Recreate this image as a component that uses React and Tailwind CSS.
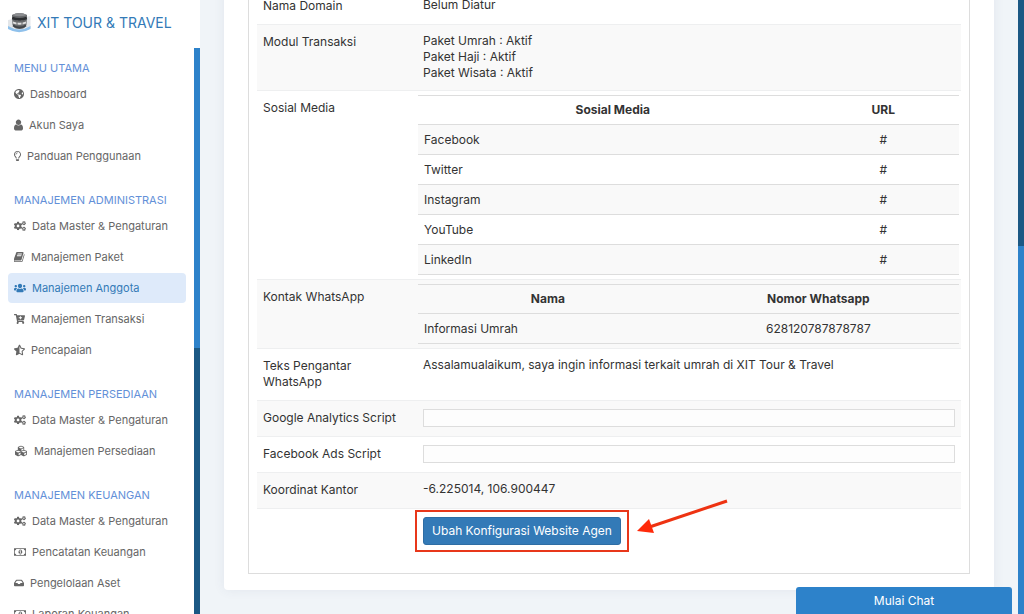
import {
  FaCartPlus,
  FaCogs,
  FaCubes,
  FaGlobeAmericas,
  FaInbox,
  FaRegLightbulb,
  FaStarHalfAlt,
  FaUsers,
} from 'react-icons/fa';

const UserIcon = ({ className }) => (
  <svg viewBox="256 128 1280 1536" fill="currentColor" className={className}>
    <path d="M1536 1399q0 109-62.5 187t-150.5 78h-854q-88 0-150.5-78t-62.5-187q0-85 8.5-160.5t31.5-152 58.5-131 94-89 134.500-34.500q131 128 313 128t313-128q76 0 134.500 34.500t94 89 58.500 131 31.500 152 8.500 160.500zm-256-887q0 159-112.500 271.500t-271.500 112.500-271.500-112.500-112.500-271.500 112.500-271.500 271.500-112.500 271.500 112.500 112.500 271.500z" />
  </svg>
);

const BookIcon = ({ className }) => (
  <svg viewBox="64 128 1664 1536" fill="currentColor" className={className}>
    <path d="M1639 478q40 57 18 129l-275 906q-19 64-76.500 107.500t-122.500 43.500h-923q-77 0-148.500-53.500t-99.500-131.500q-24-67-2-127 0-4 3-27t4-37q1-8-3-21.500t-3-19.500q2-11 8-21t16.500-23.500 16.500-23.500q23-38 45-91.500t30-91.500q3-10 .5-30t-.5-28q3-11 17-28t17-23q21-36 42-92t25-90q1-9-2.500-32t.5-28q4-13 22-30.500t22-22.500q19-26 42.500-84.500t27.500-96.500q1-8-3-25.500t-2-26.500q2-8 9-18t18-23 17-21q8-12 16.500-30.500t15-35 16-36 19.500-32 26.500-23.500 36-11.500 47.500 5.500l-1 3q38-9 51-9h761q74 0 114 56t18 130l-274 906q-36 119-71.500 153.500t-128.500 34.500h-869q-27 0-38 15-11 16-1 43 24 70 144 70h923q29 0 56-15.500t35-41.500l300-987q7-22 5-57 38 15 59 43zm-1064 2q-4 13 2 22.500t20 9.500h608q13 0 25.500-9.500t16.500-22.500l21-64q4-13-2-22.500t-20-9.500h-608q-13 0-25.500 9.500t-16.500 22.500zm-83 256q-4 13 2 22.500t20 9.500h608q13 0 25.500-9.500t16.500-22.500l21-64q4-13-2-22.500t-20-9.500h-608q-13 0-25.500 9.500t-16.500 22.500z" />
  </svg>
);

const MoneyIcon = ({ className }) => (
  <svg viewBox="0 128 2048 1536" fill="currentColor" className={className}>
    <path d="M896 1152h384v-96h-128v-448h-114l-148 137 77 80q42-37 55-57h2v288h-128v96zm512-256q0 70-21 142t-59.500 134-101.500 101-138 39-138-39-101.500-101-59.500-134-21-142 21-142 59.500-134 101.500-101 138-39 138 39 101.500 101 59.500 134 21 142zm512 256v-512q-106 0-181-75t-75-181h-1280q0 106-75 181t-181 75v512q106 0 181 75t75 181h1280q0-106 75-181t181-75zm128-832v1152q0 26-19 45t-45 19h-1920q-26 0-45-19t-19-45v-1152q0-26 19-45t45-19h1920q26 0 45 19t19 45z" />
  </svg>
);

const Logo = () => (
  <svg viewBox="0 0 24 24" className="h-6 w-6 shrink-0" aria-hidden="true">
    <path d="M0 9v8q11.500 8 22.500 0V5z" fill="#e3e6e9" />
    <path d="M0 15q11.500 7 22.500 0v3q-11.500 6.500-22.500 0z" fill="#8fc1ec" />
    <path d="M4 4Q11.500 0 19 4l-.5 9.500q-1 4.500-7 4.500t-7-4.500z" fill="#66686b" />
    <path d="M4 4Q11.500 0 19 4q-7.500 2.500-15 0z" fill="#8b8d90" />
    <path d="M4.200 7q7.300 2.500 14.600 0" fill="none" stroke="#2c2e31" strokeWidth="2.500" />
    <path d="M5 10.500q6.500 2.500 13 0v2q-6.500 2.500-13 0z" fill="#dcdcdc" />
    <path d="M9 9v6M14 9v6" stroke="#66686b" strokeWidth="1" />
    <path d="M5 14.500q6.500 4 13 0" fill="none" stroke="#3f4246" strokeWidth="2" />
  </svg>
);

const menu = [
  {
    title: 'MENU UTAMA',
    items: [
      { label: 'Dashboard', icon: FaGlobeAmericas, size: 'w-[10px]' },
      { label: 'Akun Saya', icon: UserIcon, size: 'w-[9px]' },
      { label: 'Panduan Penggunaan', icon: FaRegLightbulb, size: 'w-[7px]' },
    ],
  },
  {
    title: 'MANAJEMEN ADMINISTRASI',
    items: [
      { label: 'Data Master & Pengaturan', icon: FaCogs, size: 'w-3' },
      { label: 'Manajemen Paket', icon: BookIcon, size: 'w-[11px]' },
      { label: 'Manajemen Anggota', icon: FaUsers, size: 'w-3', active: true },
      { label: 'Manajemen Transaksi', icon: FaCartPlus, size: 'w-[11px]' },
      { label: 'Pencapaian', icon: FaStarHalfAlt, size: 'w-[11px]' },
    ],
  },
  {
    title: 'MANAJEMEN PERSEDIAAN',
    items: [
      { label: 'Data Master & Pengaturan', icon: FaCogs, size: 'w-3' },
      { label: 'Manajemen Persediaan', icon: FaCubes, size: 'w-[14px]' },
    ],
  },
  {
    title: 'MANAJEMEN KEUANGAN',
    items: [
      { label: 'Data Master & Pengaturan', icon: FaCogs, size: 'w-3' },
      { label: 'Pencatatan Keuangan', icon: MoneyIcon, size: 'w-3' },
      { label: 'Pengelolaan Aset', icon: FaInbox, size: 'w-[10px]' },
      { label: 'Laporan Keuangan', icon: MoneyIcon, size: 'w-3' },
    ],
  },
];

const sosialMedia = ['Facebook', 'Twitter', 'Instagram', 'YouTube', 'LinkedIn'];

function Sidebar() {
  return (
    <aside className="flex w-[200px] shrink-0 flex-col bg-white text-[11px]">
      <a
        href="#"
        className="flex h-12 shrink-0 items-center gap-[5px] pb-[2px] pl-2 text-[14px] whitespace-nowrap text-[#337ab7]"
      >
        <Logo />
        XIT TOUR &amp; TRAVEL
      </a>
      <div className="flex min-h-0 flex-1">
        <nav className="flex min-w-0 flex-1 flex-col gap-[18px] overflow-hidden px-2 pt-[10px]">
          {menu.map((group) => (
            <div key={group.title} className="shrink-0">
              <h2 className="mb-px h-5 pl-[6px] leading-5 whitespace-nowrap text-[#6390d8]">{group.title}</h2>
              <ul>
                {group.items.map(({ label, icon: Icon, size, active }) => (
                  <li key={label} className="mb-px">
                    <a
                      href="#"
                      className={`flex h-[30px] items-center gap-[6px] rounded pl-[6px] whitespace-nowrap ${
                        active ? 'bg-[#deeafa] text-[#337ab7]' : 'text-[#666]'
                      }`}
                    >
                      <Icon className={`h-3 shrink-0 ${size}`} />
                      {label}
                    </a>
                  </li>
                ))}
              </ul>
            </div>
          ))}
        </nav>
        <div className="w-[6px] shrink-0 bg-[#1b5884]">
          <div className="h-[300px] bg-[#2d82ca]" />
        </div>
      </div>
    </aside>
  );
}

function Row({ label, htmlFor, flush, children }) {
  return (
    <tr className="border-t border-[#eeeff0] odd:bg-white even:bg-[#f9f9f9]">
      <th scope="row" className="w-[161px] pt-[9px] pr-4 pb-[10px] pl-[6px] text-left align-top font-normal">
        {htmlFor ? <label htmlFor={htmlFor}>{label}</label> : label}
      </th>
      <td className={flush ? 'pt-1 pr-[2px] pb-1 align-top' : 'pt-2 pr-[6px] pb-[9px] pl-[5px] align-top'}>
        {children}
      </td>
    </tr>
  );
}

function DataTable({ columns, firstWidth, rows }) {
  return (
    <table className="w-full table-fixed border-collapse border-y border-[#ddd]">
      <thead>
        <tr className="h-[29px]">
          {columns.map((column, i) => (
            <th key={column} className={`font-bold ${i === 0 ? firstWidth : ''}`}>
              {column}
            </th>
          ))}
        </tr>
      </thead>
      <tbody>
        {rows.map(([name, value]) => (
          <tr key={name} className="h-[30px] border-t border-[#ddd] odd:bg-[#f9f9f9] even:bg-white">
            <td className="px-[6px]">{name}</td>
            <td className="text-center">{value}</td>
          </tr>
        ))}
      </tbody>
    </table>
  );
}

const scriptClass = 'block h-[18px] w-full resize-none border border-[#ddd] bg-[#fdfdfd] px-1 focus:outline-none';

export default function App() {
  return (
    <div className="flex h-screen overflow-hidden bg-[#f0f4f8] font-['Inter',sans-serif] text-[12px] leading-4 text-[#333]">
      <Sidebar />

      <main className="min-w-0 flex-1 overflow-hidden px-6">
        <div className="-mt-3 rounded-b-sm bg-white px-6 pb-4 shadow-[0_0_12px_rgba(60,80,120,0.08)]">
          <div className="border border-t-0 border-[#ddd] px-2 pb-7">
            <table className="w-full border-collapse">
              <tbody>
                <Row label="Nama Domain">Belum Diatur</Row>
                <Row label="Modul Transaksi">
                  <p>Paket Umrah : Aktif</p>
                  <p>Paket Haji : Aktif</p>
                  <p>Paket Wisata : Aktif</p>
                </Row>
                <Row label="Sosial Media" flush>
                  <DataTable
                    columns={['Sosial Media', 'URL']}
                    firstWidth="w-[72%]"
                    rows={sosialMedia.map((name) => [name, '#'])}
                  />
                </Row>
                <Row label="Kontak WhatsApp" flush>
                  <DataTable
                    columns={['Nama', 'Nomor Whatsapp']}
                    firstWidth="w-[48%]"
                    rows={[['Informasi Umrah', '628120787878787']]}
                  />
                </Row>
                <Row label="Teks Pengantar WhatsApp">
                  Assalamualaikum, saya ingin informasi terkait umrah di XIT Tour &amp; Travel
                </Row>
                <Row label="Google Analytics Script" htmlFor="ga_script">
                  <textarea id="ga_script" rows={1} readOnly className={scriptClass} />
                </Row>
                <Row label="Facebook Ads Script" htmlFor="fb_script">
                  <textarea id="fb_script" rows={1} readOnly className={scriptClass} />
                </Row>
                <Row label="Koordinat Kantor">-6.225014, 106.900447</Row>
              </tbody>
            </table>

            <div className="border-t border-[#eeeff0] pt-2 pl-[166px]">
              <div className="relative w-fit">
                <button
                  type="button"
                  className="block h-7 rounded-[3px] border border-[#2e6da4] bg-[#337ab7] px-2 whitespace-nowrap text-white"
                >
                  Ubah Konfigurasi Website Agen
                </button>
                <div className="pointer-events-none absolute -inset-x-2 -inset-y-[7px] border-2 border-[#e8371a]" />
                <svg
                  viewBox="0 0 92 36"
                  className="pointer-events-none absolute -top-[18px] left-full ml-4 h-9 w-[92px]"
                  aria-hidden="true"
                >
                  <path d="M90 2 14 27.500" stroke="#ee3312" strokeWidth="3" />
                  <path d="M0 32 12 20l5 14z" fill="#ff2a0a" />
                </svg>
              </div>
            </div>
          </div>
        </div>
      </main>

      <div className="w-[6px] shrink-0 bg-[#2d82ca]">
        <div className="h-[246px] bg-[#1b5884]" />
      </div>

      <button
        type="button"
        className="fixed right-3 bottom-0 h-[27px] w-[216px] rounded-t-[3px] bg-[#2d82ca] text-white"
      >
        Mulai Chat
      </button>
    </div>
  );
}
